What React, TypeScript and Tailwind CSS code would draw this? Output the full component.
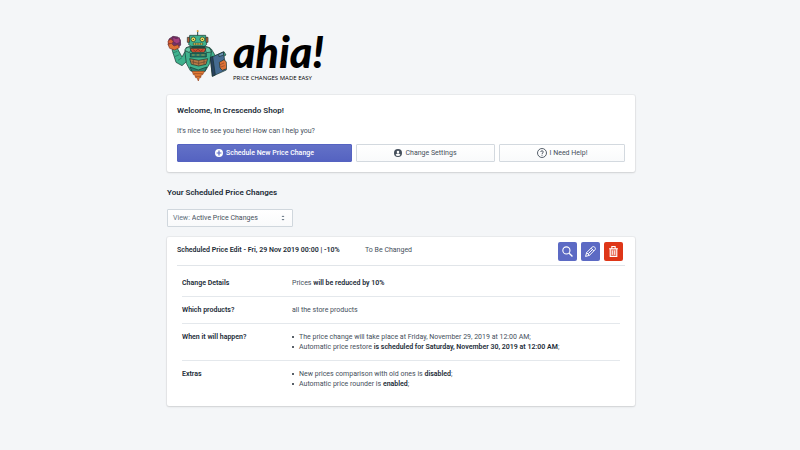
import React from "react";

function Robot() {
  return (
    <svg className="h-[53px] w-[60px] shrink-0" viewBox="21 12 180 159" stroke="#17332f" strokeWidth="2" strokeLinejoin="round" aria-hidden="true">
      <path d="M113 18v14" fill="none" stroke="#27504a" strokeWidth="3" />
      <circle cx="113" cy="18" r="3" fill="#e0a23a" stroke="none" />
      <path d="M36 74l16-4 14 26 14-26 16 2-8 30-22 20-18-10z" fill="#3fb28e" />
      <path d="M38 84l14-5M44 95l14-6M54 106l12-8M75 92l12 9" fill="none" stroke="#236b5b" />
      <path d="M136 68l18 4 12 20 26-12 6 10-30 18-22-4z" fill="#3fb28e" />
      <path d="M78 68l16-5h38l18 5 4 14-5 34-12 20-22 7-24-6-12-22-4-32z" fill="#3fb28e" />
      <path d="M74 76c4-10 14-12 22-7l-8 14zM134 67c10-3 18 3 20 14l-15 2z" fill="#62c4a2" />
      <path d="M97 60h36v8H97z" fill="#27504a" />
      <path d="M90 70h48l-5 12H96z" fill="#d8502f" />
      <path d="M98 73l8 6 8-6 8 6 8-6" fill="none" stroke="#6d2a20" />
      <path d="M91 85h48v11H91z" fill="#24766a" />
      <path d="M96 90h8M110 90h8M124 90h10" stroke="#e3b53b" />
      <path d="M89 101l27 5 27-5-5 17-22 5-22-5z" fill="#b77a45" />
      <path d="M95 110l21 5 21-5M100 103v15M116 107v15M132 104v14" fill="none" stroke="#624130" />
      <path d="M89 31h48l3 28-7 5H94l-8-5z" fill="#3fb28e" />
      <path d="M82 37h6v15h-6zM138 37h6v15h-6z" fill="#cb6236" />
      <circle cx="100" cy="43" r="7" fill="#f0df58" />
      <circle cx="127" cy="43" r="7" fill="#f0df58" />
      <circle cx="100" cy="43" r="2" fill="#17332f" stroke="none" />
      <circle cx="127" cy="43" r="2" fill="#17332f" stroke="none" />
      <path d="M100 54h28v6h-28zM107 54v6M114 54v6M121 54v6" fill="#e5cf58" strokeWidth="1.5" />
      <path d="M90 126l25 9 25-9-5 14H96z" fill="#287f70" />
      <path d="M97 139h36l-5 10h-4l-2 9h-4l-3 10-4-10h-4l-3-9h-4z" fill="#e37c32" stroke="#994724" />
      <path d="M101 146h27M106 154h17" stroke="#8c4428" />
      <path d="M27 42l12-8 14 2 8 8 1 16-10 10-17-1-10-10z" fill="#713365" stroke="#4a2142" />
      <path d="M38 36l10 5 10-3 2 14-10 4-10-6z" fill="#a43f7e" stroke="#5f2554" />
      <path d="M24 48l9-6 7 8-5 6-10 1z" fill="#dd5f34" stroke="#7b3428" />
      <path d="M24 58l10-3 8 8 12-4 4 9-14 7-15-5z" fill="#dd7134" stroke="#7b3428" />
      <path d="M151 98l39-17 9 54-42 19z" fill="#456b91" />
      <path d="M151 98l7-4 8 56-9 4z" fill="#29405e" />
      <path d="M176 88l14-7 1 9-14 5z" fill="#6c91b5" />
      <path d="M178 112l14-8 7 7 1 20-13 5-7-7z" fill="#dd7134" />
      <path d="M180 119l12-5M182 126l12-4" fill="none" stroke="#8c4428" />
    </svg>
  );
}

function PlusIcon() {
  return (
    <svg className="size-2 shrink-0" viewBox="0 0 20 20" aria-hidden="true">
      <circle cx="10" cy="10" r="10" fill="currentColor" />
      <path d="M10 4v12M4 10h12" stroke="#5c6ac4" strokeWidth="3" />
    </svg>
  );
}

function AccountIcon() {
  return (
    <svg className="size-2 shrink-0" viewBox="0 0 20 20" aria-hidden="true">
      <circle cx="10" cy="10" r="10" fill="#454f5b" />
      <circle cx="10" cy="7.5" r="3.2" fill="#fff" />
      <path d="M4 15c2-5 10-5 12 0-3 3-9 3-12 0z" fill="#fff" />
    </svg>
  );
}

function HelpIcon() {
  return (
    <svg className="size-[10px] shrink-0" viewBox="0 0 20 20" fill="none" stroke="#454f5b" strokeWidth="1.8" aria-hidden="true">
      <circle cx="10" cy="10" r="9" />
      <path d="M7.5 8c0-3.5 5-3.5 5 0 0 2-2.5 2-2.5 4M10 13.5v2" />
    </svg>
  );
}

function SearchIcon() {
  return (
    <svg className="size-[11px]" viewBox="0 0 20 20" fill="none" stroke="currentColor" strokeWidth="2" aria-hidden="true">
      <circle cx="8" cy="8" r="6.5" />
      <path d="M13 13l6 6" strokeWidth="2.5" />
    </svg>
  );
}

function PencilIcon() {
  return (
    <svg className="size-[11px]" viewBox="0 0 20 20" fill="none" stroke="currentColor" strokeWidth="1.8" strokeLinejoin="round" aria-hidden="true">
      <path d="M1 19l2-7L13 2c3-3 8 2 5 5L8 17zM11 4l5 5M3 12l5 5M6 14l8-8" />
    </svg>
  );
}

function TrashIcon() {
  return (
    <svg className="size-[11px]" viewBox="0 0 20 20" fill="none" stroke="currentColor" strokeWidth="2" aria-hidden="true">
      <path d="M2 5h16M7 5V1h6v4" />
      <path d="M4 5v14h12V5" fill="#fff" fillOpacity="0.35" />
      <path d="M8 8v8M12 8v8" strokeWidth="1.5" />
    </svg>
  );
}

const plainButton =
  "flex h-[18px] items-center justify-center gap-[3px] rounded-[1px] border border-[#d3d9df] bg-linear-to-b from-white to-[#f9fafb]";
const iconButton = "flex size-[19px] items-center justify-center rounded-[2px] text-white";
const card = "rounded-[2px] bg-white px-[10px] shadow-[0_0_0_1px_rgba(63,63,68,0.05),0_1px_2px_0_rgba(63,63,68,0.15)]";

function Row({ label, children }: { label: string; children: React.ReactNode }) {
  return (
    <div className="flex border-b border-[#e4e8ec] py-2 last:border-b-0">
      <dt className="w-[110px] shrink-0 font-semibold text-[#212b36]">{label}</dt>
      <dd className="[&_strong]:font-semibold [&_strong]:text-[#212b36]">{children}</dd>
    </div>
  );
}

function Item({ children }: { children: React.ReactNode }) {
  return (
    <li className="flex gap-[5px] before:mt-1 before:size-[2px] before:shrink-0 before:rounded-full before:bg-[#212b36]">
      <span>{children}</span>
    </li>
  );
}

export default function App() {
  return (
    <div className="min-h-screen bg-[#f4f6f8] pt-[29px] pr-4 pb-11 pl-[18px] font-['Roboto',sans-serif] text-[7px] leading-[10px] text-[#454f5b]">
      <main className="mx-auto max-w-[468px]">
        <header className="flex gap-[6px]">
          <Robot />
          <div className="text-black">
            <div className="h-11 font-['Lato',sans-serif] text-[43px] leading-[46px] font-black italic">ahia!</div>
            <div className="font-['Open_Sans',sans-serif] text-[6px] leading-[10px] whitespace-nowrap">PRICE CHANGES MADE EASY</div>
          </div>
        </header>

        <section className={`${card} mt-3 pt-[10px] pb-[10px]`}>
          <h1 className="text-[8px] leading-3 font-semibold text-[#212b36]">Welcome, In Crescendo Shop!</h1>
          <p className="mt-[9px]">It's nice to see you here! How can I help you?</p>
          <div className="mt-2 grid grid-cols-[175fr_139fr_126fr] gap-1">
            <button type="button" className="flex h-[18px] items-center justify-center gap-[3px] rounded-[1px] border border-[#5563c1] bg-linear-to-b from-[#6371c7] to-[#5563c1] font-medium text-white">
              <PlusIcon />
              Schedule New Price Change
            </button>
            <button type="button" className={plainButton}>
              <AccountIcon />
              Change Settings
            </button>
            <button type="button" className={plainButton}>
              <HelpIcon />
              I Need Help!
            </button>
          </div>
        </section>

        <h2 className="mt-[15px] text-[8px] leading-3 font-semibold text-[#212b36]">Your Scheduled Price Changes</h2>

        <div className="relative mt-[10px] flex h-[18px] w-[126px] items-center rounded-[1px] border border-[#d0d7dd] bg-linear-to-b from-white to-[#f9fafb] pl-[5px]">
          <label htmlFor="view" className="text-[#637381]">View:</label>
          <select id="view" className="h-full flex-1 appearance-none bg-transparent pl-[2px] outline-none">
            <option>Active Price Changes</option>
          </select>
          <svg className="pointer-events-none absolute right-[7px] h-[6px] w-1" viewBox="0 0 8 12" fill="#637381" aria-hidden="true">
            <path d="M4 1l3 3H1zM4 11l3-3H1z" />
          </svg>
        </div>

        <section className={`${card} mt-[10px] pt-[5px] pb-[9px]`}>
          <div className="flex h-6 items-start border-b border-[#e1e5e9]">
            <h3 className="w-[188px] pt-[3px] font-semibold text-[#212b36]">Scheduled Price Edit - Fri, 29 Nov 2019 00:00 | -10%</h3>
            <span className="flex-1 pt-[3px]">To Be Changed</span>
            <div className="flex gap-1 pr-[2px]">
              <button type="button" aria-label="View" className={`${iconButton} bg-[#5c6ac4]`}><SearchIcon /></button>
              <button type="button" aria-label="Edit" className={`${iconButton} bg-[#5c6ac4]`}><PencilIcon /></button>
              <button type="button" aria-label="Delete" className={`${iconButton} bg-[#de3618]`}><TrashIcon /></button>
            </div>
          </div>
          <dl className="px-[5px] pt-1">
            <Row label="Change Details">
              Prices <strong>will be reduced by 10%</strong>
            </Row>
            <Row label="Which products?">all the store products</Row>
            <Row label="When it will happen?">
              <ul>
                <Item>The price change will take place at Friday, November 29, 2019 at 12:00 AM;</Item>
                <Item>Automatic price restore <strong>is scheduled for Saturday, November 30, 2019 at 12:00 AM</strong>;</Item>
              </ul>
            </Row>
            <Row label="Extras">
              <ul>
                <Item>New prices comparison with old ones is <strong>disabled</strong>;</Item>
                <Item>Automatic price rounder is <strong>enabled</strong>;</Item>
              </ul>
            </Row>
          </dl>
        </section>
      </main>
    </div>
  );
}
